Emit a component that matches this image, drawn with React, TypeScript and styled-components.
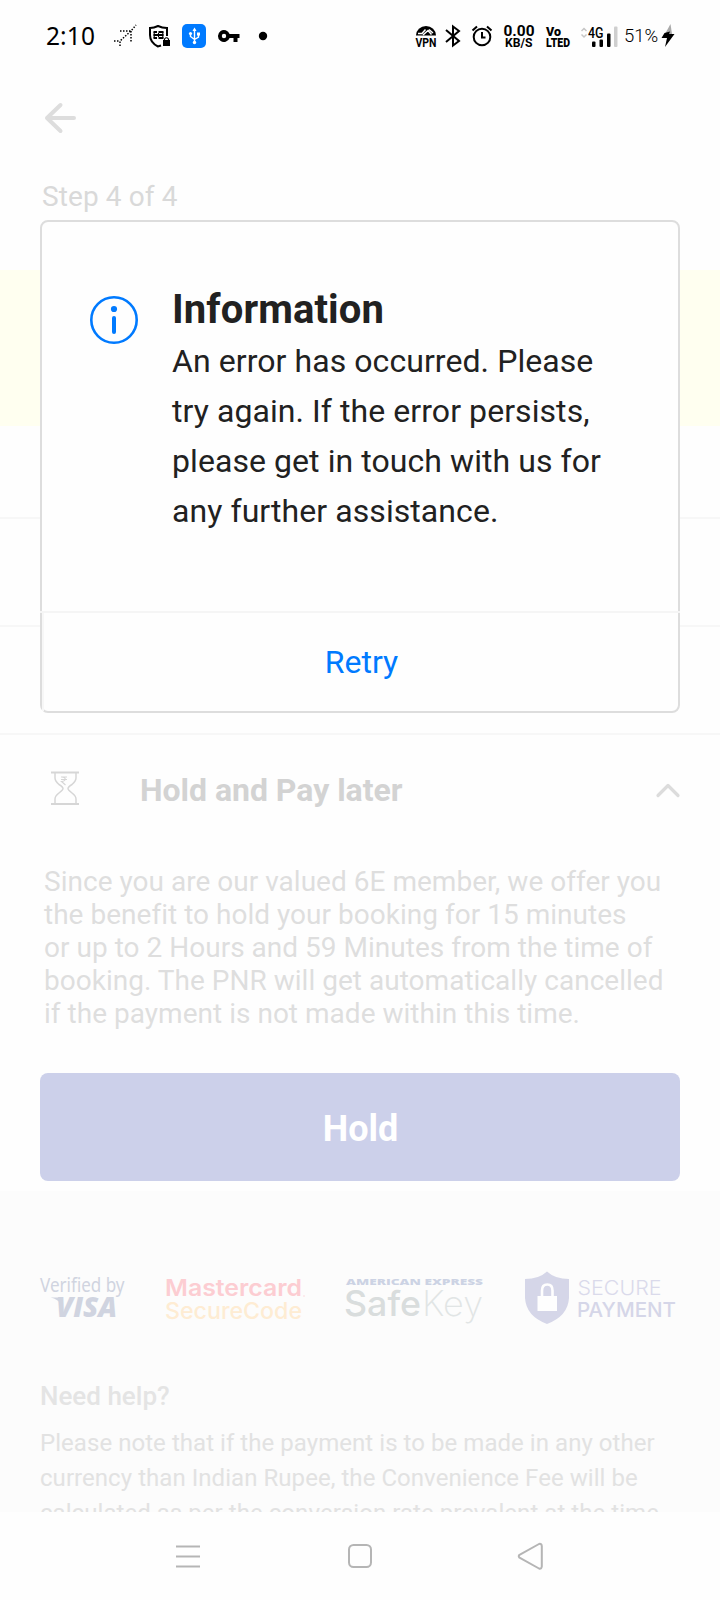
import React from "react";
import styled, { createGlobalStyle } from "styled-components";

const GlobalStyle = createGlobalStyle`
  *, *::before, *::after { box-sizing: border-box; }
  body { margin: 0; background: #fefefe; }
  h1, h2, h3, p { margin: 0; }
  button { font: inherit; border: 0; background: none; padding: 0; }
  svg { display: block; flex: none; overflow: visible; }
`;

const Screen = styled.div`
  position: relative;
  width: 720px;
  height: 1600px;
  display: flex;
  flex-direction: column;
  overflow: hidden;
  background: #fefefe;
  font-family: Roboto, "Liberation Sans", sans-serif;
`;

const StatusBar = styled.header`
  display: flex;
  align-items: center;
  height: 72px;
  flex: none;
  padding: 0 45px 0 46px;
  color: #000;
`;

const Clock = styled.span`
  width: 66px;
  font: 400 24.5px/30px "Noto Sans", sans-serif;
  letter-spacing: 0.1px;
`;

const StatusGroup = styled.div<{ $end?: boolean }>`
  display: flex;
  align-items: center;
  margin-left: ${(p) => (p.$end ? "auto" : "0")};
`;

const PageBody = styled.main`
  display: flex;
  flex-direction: column;
  height: 1440px;
  flex: none;
  overflow: hidden;
`;

const TopBar = styled.div`
  display: flex;
  flex-direction: column;
  height: 198px;
  flex: none;
  padding: 30px 42px 0;
`;

const StepLabel = styled.p`
  margin-top: 46px;
  font-size: 28px;
  line-height: 33px;
  letter-spacing: 0.1px;
  color: #d9d9d9;
`;

const Notice = styled.div`
  height: 156px;
  flex: none;
  background: #fffff0;
`;

const MethodRow = styled.div<{ $height: number }>`
  height: ${(p) => p.$height}px;
  flex: none;
  border-bottom: 2px solid #f7f7f7;
`;

const HoldSection = styled.section`
  display: flex;
  flex-direction: column;
  height: 456px;
  flex: none;
  padding: 33px 40px 0;
`;

const HoldHeader = styled.div`
  display: flex;
  align-items: center;
  height: 40px;
  padding-left: 10px;
`;

const HoldTitle = styled.h2`
  flex: 1;
  margin: 4px 0 0 60px;
  font-size: 32px;
  font-weight: 700;
  line-height: 40px;
  letter-spacing: -0.03px;
  color: #d3d3d3;
`;

const HoldCopy = styled.p`
  margin: 57px 0 0 4px;
  font-size: 28px;
  line-height: 33px;
  letter-spacing: 0.02px;
  white-space: nowrap;
  color: #dedede;
`;

const HoldButton = styled.button`
  height: 108px;
  margin-top: 43px;
  padding: 4px 0 0 1px;
  border-radius: 8px;
  background: #ccd0ea;
  color: #fff;
  font-size: 36px;
  font-weight: 700;
`;

const Footer = styled.footer`
  display: flex;
  flex-direction: column;
  flex: 1;
  padding: 74px 40px 0;
  background: #fcfcfc;
`;

const Badges = styled.div`
  display: flex;
  justify-content: space-between;
  height: 66px;
`;

const HelpTitle = styled.h3`
  margin-top: 50px;
  font-size: 26px;
  font-weight: 500;
  line-height: 30px;
  color: #e4e4e4;
`;

const HelpCopy = styled.p`
  margin-top: 15px;
  font-size: 24px;
  line-height: 35px;
  letter-spacing: 0.05px;
  white-space: nowrap;
  color: #e2e2e2;
`;

const NavBar = styled.nav`
  display: flex;
  align-items: center;
  justify-content: space-between;
  flex: 1;
  padding: 0 174px 0 174px;
`;

const Dialog = styled.div`
  position: absolute;
  left: 40px;
  top: 220px;
  width: 640px;
  height: 493px;
  display: flex;
  flex-direction: column;
  border: 2px solid #ddd;
  border-radius: 8px;
  background: #fefefe;
`;

const DialogBody = styled.div`
  display: flex;
  height: 389px;
  flex: none;
  padding: 63px 40px 0 48px;
`;

const DialogText = styled.div`
  margin: 0 0 0 34px;
  color: #212121;
`;

const DialogTitle = styled.h1`
  font-size: 40px;
  font-weight: 700;
  line-height: 50px;
  letter-spacing: 0.1px;
`;

const DialogMessage = styled.p`
  margin-top: 1px;
  font-size: 32px;
  line-height: 50px;
  letter-spacing: 0.07px;
  white-space: nowrap;
`;

const RetryButton = styled.button`
  display: flex;
  align-items: center;
  justify-content: center;
  height: 100px;
  flex: none;
  margin: 0 -2px;
  padding-left: 3px;
  border-top: 2px solid #f5f5f5;
  background: linear-gradient(#f7f7f7, #f7f7f7) 2px 0 / 2px 100% no-repeat;
  color: #007aff;
  font-size: 32px;
`;

/* Status bar glyphs */

const PlaneIcon = () => (
  <svg width="24" height="24" viewBox="0 0 24 24" fill="none" stroke="#000" strokeWidth="1.5" strokeDasharray="1.5 1.5">
    <path d="M1 17H7M7 22V17L18 7L23 1M7 7H18M18 7V19" />
  </svg>
);

const ShieldLockIcon = () => (
  <svg width="24" height="24" viewBox="0 0 24 24" fill="none" stroke="#000">
    <path d="M13 21.5L10 22.5C5 20 2 16 2 11V4C5 4 7 3.5 10 2C13 3.500 15 4 19 4V12" strokeWidth="2" />
    <path d="M5.500 8H9M10.500 8H15.500M5.500 11H15.500M5.500 14H9M10.500 14H15.500" strokeWidth="1.8" />
    <path d="M6.200 8V14M10.500 9V13M14.800 8V14" strokeWidth="1.100" />
    <rect x="15" y="16" width="7" height="6" fill="#000" stroke="none" />
    <path d="M16.500 17V15Q18.500 12.500 20.500 15V17" strokeWidth="1.2" />
  </svg>
);

const UsbIcon = () => (
  <svg width="24" height="24" viewBox="0 0 24 24">
    <rect width="24" height="24" rx="5" fill="#007aff" />
    <path d="M12.500 5V18M8.500 10V12.500L12.500 15.500L16.500 13V10" stroke="#fff" strokeWidth="1.4" fill="none" />
    <path d="M12.500 3.500L10.500 7H14.500Z" fill="#fff" />
    <circle cx="12.500" cy="18.500" r="1.700" fill="#fff" />
    <rect x="15" y="8.500" width="3" height="3" fill="#fff" />
    <circle cx="8.500" cy="9.500" r="1.600" fill="#fff" />
  </svg>
);

const KeyIcon = () => (
  <svg width="22" height="14" viewBox="0 0 22 14">
    <path fillRule="evenodd" d="M11.600 5A6 6 0 1 0 11.600 9H15.500V13H19.500V9H21.500V5ZM6 9.200A2.200 2.200 0 1 1 6 4.800A2.200 2.200 0 0 1 6 9.200Z" />
  </svg>
);

const DotIcon = () => (
  <svg width="10" height="10" viewBox="0 0 10 10">
    <circle cx="5" cy="5" r="4.200" />
  </svg>
);

const VpnIcon = () => (
  <svg width="22" height="24" viewBox="0 0 22 24">
    <path d="M1 10.500A10 9.500 0 0 1 21 10.500Z" />
    <path d="M3 8.500H7L10.500 4.500M8 10L13 5.500L16.500 9.500M14 4.500L18 8" stroke="#fff" strokeWidth="1.500" fill="none" />
    <text x="0.500" y="22" fontFamily="Roboto" fontSize="12" fontWeight="700" textLength="21" lengthAdjust="spacingAndGlyphs">VPN</text>
  </svg>
);

const BluetoothIcon = () => (
  <svg width="18" height="24" viewBox="0 0 18 24" fill="none" stroke="#000" strokeWidth="2">
    <path d="M2 6L15 17L9 21.500V2.500L15 7L2 18" />
  </svg>
);

const AlarmIcon = () => (
  <svg width="22" height="24" viewBox="0 0 22 24" fill="none" stroke="#000" strokeWidth="2">
    <circle cx="11" cy="13" r="8.300" />
    <path d="M11 8V13.500H14.500M1.500 6.500L6 2.500M20.500 6.500L16 2.500" />
  </svg>
);

const SpeedIcon = () => (
  <svg width="32" height="26" viewBox="0 0 32 26" fontFamily="Roboto" fontWeight="700">
    <text x="0.500" y="13" fontSize="15.500" textLength="31" lengthAdjust="spacingAndGlyphs">0.00</text>
    <text x="2" y="24" fontSize="12" textLength="27.500" lengthAdjust="spacingAndGlyphs">KB/S</text>
  </svg>
);

const VolteIcon = () => (
  <svg width="26" height="24" viewBox="0 0 26 24" fontFamily="Roboto" fontWeight="900">
    <text x="1" y="10.500" fontSize="13" textLength="15" lengthAdjust="spacingAndGlyphs">Vo</text>
    <text x="1" y="22" fontSize="13.500" textLength="24" lengthAdjust="spacingAndGlyphs">LTED</text>
  </svg>
);

const SignalIcon = () => (
  <svg width="38" height="24" viewBox="0 0 38 24">
    <path d="M1.500 7L4 4.500L6.500 7M1.500 10.500L4 13L6.500 10.500" stroke="#c6c6c6" strokeWidth="1.500" fill="none" />
    <text x="8" y="14" fontFamily="Roboto" fontSize="14" fontWeight="500" textLength="15.500" lengthAdjust="spacingAndGlyphs">4G</text>
    <rect x="12" y="17.500" width="3.500" height="5.500" rx="1" />
    <rect x="19.500" y="15.500" width="3.500" height="7.500" rx="1" />
    <rect x="27" y="9.500" width="3.500" height="13.500" rx="1" />
    <rect x="34" y="2.500" width="3.500" height="20.500" rx="1" fill="#cfcfcf" />
  </svg>
);

const BatteryText = styled.span`
  display: block;
  width: 34px;
  font-size: 18.5px;
  font-weight: 300;
  line-height: 24px;
  white-space: nowrap;
`;

const BoltIcon = () => (
  <svg width="14" height="26" viewBox="0 0 14 26">
    <path d="M9.500 1L4 11H11Z" fill="#aaa" />
    <path d="M3.500 10L0.500 15H6L4 24L13.500 11H8L9 8.500Z" />
  </svg>
);

const Slot = styled.span<{ $left: number; $top?: number }>`
  display: block;
  margin-left: ${(p) => p.$left}px;
  padding-top: ${(p) => p.$top ?? 0}px;
`;

/* Page glyphs */

const BackIcon = () => (
  <svg width="36" height="32" viewBox="0 0 36 32" fill="none" stroke="#ddd" strokeWidth="4" strokeLinecap="round" strokeLinejoin="round">
    <path d="M18.500 3L5 16L18.500 29M5 16H32" />
  </svg>
);

const HourglassIcon = () => (
  <svg width="30" height="36" viewBox="0 0 30 36" fill="none" stroke="#d6d6d6" strokeWidth="1.500">
    <path d="M1 2.500H29M1 34H29" strokeWidth="1.800" />
    <path d="M5 3V8Q5 11 9 14.500Q13 17 13 18.500Q13 20 9 23Q5 26 5 29V33.500M26 3V8Q26 11 22 14.500Q18 17 18 18.500Q18 20 22 23Q26 26 26 29V33.500" />
    <path d="M11 7H17M11 9.500H17M11.500 7Q16 7 15 10Q14 11.500 11.500 11.500L15.500 15" strokeWidth="1.100" />
  </svg>
);

const ChevronUpIcon = () => (
  <svg width="24" height="16" viewBox="0 0 24 16" fill="none" stroke="#dcdcdc" strokeWidth="3.200" strokeLinecap="round" strokeLinejoin="round">
    <path d="M2 15.500L12 5.500L22 15.500" />
  </svg>
);

const InfoIcon = () => (
  <svg width="48" height="48" viewBox="0 0 48 48">
    <circle cx="24" cy="24" r="22.700" fill="none" stroke="#007aff" strokeWidth="2.600" />
    <circle cx="24" cy="13" r="3.100" fill="#007aff" />
    <rect x="22" y="20" width="4" height="18" rx="2" fill="#007aff" />
  </svg>
);

/* Payment badges */

const VisaBadge = () => (
  <svg width="86" height="60" viewBox="0 0 86 60" fill="#d0d4e0">
    <text x="0" y="26.500" fontFamily="Noto Sans" fontSize="19" textLength="84.500" lengthAdjust="spacingAndGlyphs">Verified by</text>
    <text x="16" y="52" fontFamily="Open Sans" fontStyle="italic" fontSize="27.500" fontWeight="800" textLength="61" lengthAdjust="spacingAndGlyphs">VISA</text>
    <path d="M10.500 32.500H21L22 40Q18 34 10.500 32.500Z" />
  </svg>
);

const MastercardBadge = () => (
  <svg width="140" height="60" viewBox="0 0 140 60" fontFamily="Inter">
    <text x="-1" y="31" fontSize="23" fontWeight="600" fill="#fccdd2" textLength="137" lengthAdjust="spacingAndGlyphs">Mastercard</text>
    <circle cx="138" cy="31" r="0.700" fill="#fccdd2" />
    <text x="-1" y="54" fontSize="23" fontWeight="500" fill="#feecd3" textLength="137" lengthAdjust="spacingAndGlyphs">SecureCode</text>
  </svg>
);

const SafeKeyBadge = () => (
  <svg width="138" height="66" viewBox="0 0 138 66">
    <text x="0" y="19.500" fontFamily="Open Sans" fontSize="9.500" fontWeight="800" fill="#ccd3e4" textLength="137" lengthAdjust="spacingAndGlyphs">AMERICAN EXPRESS</text>
    <text x="-2" y="51" fontFamily="Inter" fontSize="35" fontWeight="500" fill="#d9dddd" textLength="77" lengthAdjust="spacingAndGlyphs">Safe</text>
    <text x="76" y="51" fontFamily="Inter" fontSize="35" fontWeight="200" fill="#e1e5e5" textLength="61" lengthAdjust="spacingAndGlyphs">Key</text>
  </svg>
);

const SecureBadge = () => (
  <svg width="156" height="60" viewBox="0 0 156 60" fill="#d5d6e8">
    <path d="M23 6.500Q31 14 45 14V33Q44 51 23 59Q2 51 1 33V14Q15 14 23 6.500Z" />
    <rect x="13.500" y="31" width="19.500" height="15" fill="#fefefe" />
    <path d="M18 32V25.500Q18 19.500 23.300 19.500Q28.500 19.500 28.500 25.500V32" fill="none" stroke="#fefefe" strokeWidth="2.600" />
    <text x="53.500" y="29.500" fontFamily="Inter" fontSize="20.500" fontWeight="300" fill="#dadaeb" textLength="84" lengthAdjust="spacingAndGlyphs">SECURE</text>
    <text x="53" y="51.500" fontFamily="Inter" fontSize="20" fontWeight="500" textLength="99" lengthAdjust="spacingAndGlyphs">PAYMENT</text>
  </svg>
);

/* System navigation glyphs */

const RecentsIcon = () => (
  <svg width="28" height="28" viewBox="0 0 28 28" stroke="#b5b5b5" strokeWidth="2">
    <path d="M2 4.500H26M2 14.500H26M2 24.500H26" />
  </svg>
);

const HomeIcon = () => (
  <svg width="28" height="28" viewBox="0 0 28 28" fill="none" stroke="#b5b5b5" strokeWidth="2">
    <rect x="3" y="3" width="22" height="22" rx="4.500" />
  </svg>
);

const NavBackIcon = () => (
  <svg width="28" height="28" viewBox="0 0 28 28" fill="none" stroke="#b5b5b5" strokeWidth="2" strokeLinejoin="round">
    <path d="M1.500 12.800L21 2Q23.500 1.300 23.800 4V24.500Q23.500 27.200 21 26.500L1.500 15.700Q0 14.200 1.500 12.800Z" />
  </svg>
);

export default function App() {
  return (
    <Screen>
      <GlobalStyle />
      <StatusBar>
        <Clock>2:10</Clock>
        <StatusGroup>
          <Slot $left={1}><PlaneIcon /></Slot>
          <Slot $left={11}><ShieldLockIcon /></Slot>
          <Slot $left={10}><UsbIcon /></Slot>
          <Slot $left={12}><KeyIcon /></Slot>
          <Slot $left={18}><DotIcon /></Slot>
        </StatusGroup>
        <StatusGroup $end>
          <Slot $left={0} $top={2}><VpnIcon /></Slot>
          <Slot $left={7}><BluetoothIcon /></Slot>
          <Slot $left={9}><AlarmIcon /></Slot>
          <Slot $left={10}><SpeedIcon /></Slot>
          <Slot $left={10} $top={2}><VolteIcon /></Slot>
          <Slot $left={9}><SignalIcon /></Slot>
          <Slot $left={6}><BatteryText>51%</BatteryText></Slot>
          <Slot $left={3}><BoltIcon /></Slot>
        </StatusGroup>
      </StatusBar>

      <PageBody>
        <TopBar>
          <BackIcon />
          <StepLabel>Step 4 of 4</StepLabel>
        </TopBar>
        <Notice />
        <MethodRow $height={93} />
        <MethodRow $height={108} />
        <MethodRow $height={108} />
        <HoldSection>
          <HoldHeader>
            <HourglassIcon />
            <HoldTitle>Hold and Pay later</HoldTitle>
            <ChevronUpIcon />
          </HoldHeader>
          <HoldCopy>
            Since you are our valued 6E member, we offer you<br />
            the benefit to hold your booking for 15 minutes<br />
            or up to 2 Hours and 59 Minutes from the time of<br />
            booking. The PNR will get automatically cancelled<br />
            if the payment is not made within this time.
          </HoldCopy>
          <HoldButton>Hold</HoldButton>
        </HoldSection>
        <Footer>
          <Badges>
            <VisaBadge />
            <MastercardBadge />
            <SafeKeyBadge />
            <SecureBadge />
          </Badges>
          <HelpTitle>Need help?</HelpTitle>
          <HelpCopy>
            Please note that if the payment is to be made in any other<br />
            currency than Indian Rupee, the Convenience Fee will be<br />
            calculated as per the conversion rate prevalent at the time
          </HelpCopy>
        </Footer>
      </PageBody>

      <NavBar>
        <RecentsIcon />
        <HomeIcon />
        <NavBackIcon />
      </NavBar>

      <Dialog role="dialog">
        <DialogBody>
          <Slot $left={0} $top={11}><InfoIcon /></Slot>
          <DialogText>
            <DialogTitle>Information</DialogTitle>
            <DialogMessage>
              An error has occurred. Please<br />
              try again. If the error persists,<br />
              please get in touch with us for<br />
              any further assistance.
            </DialogMessage>
          </DialogText>
        </DialogBody>
        <RetryButton>Retry</RetryButton>
      </Dialog>
    </Screen>
  );
}
